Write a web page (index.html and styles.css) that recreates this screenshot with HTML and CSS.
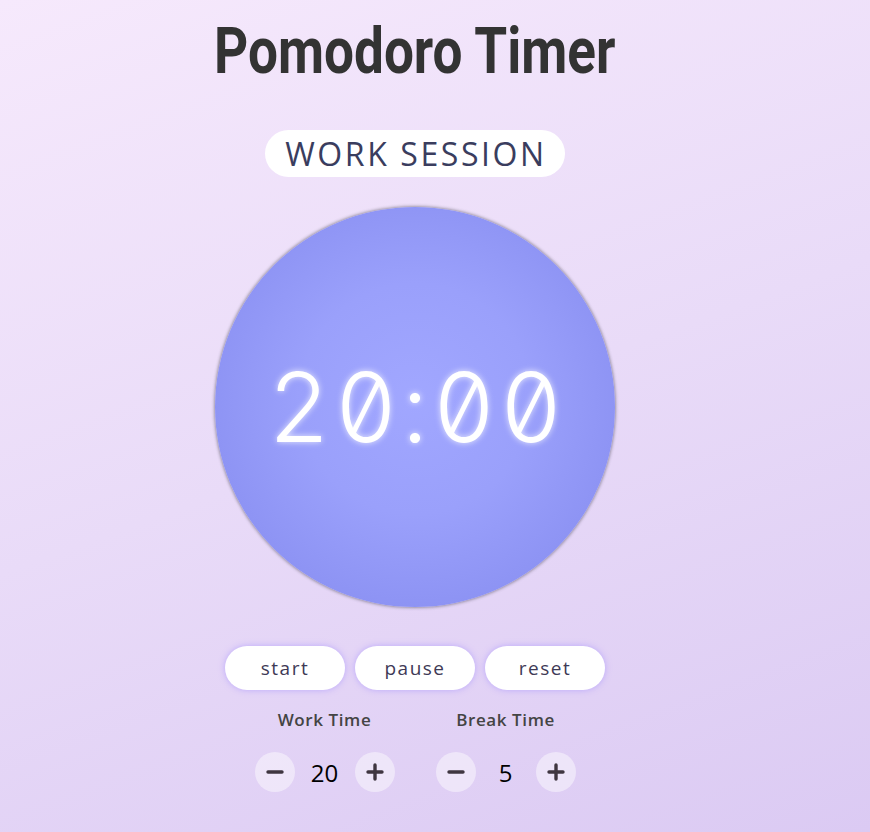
FILE: index.html
```html
<!DOCTYPE html>
<html lang="en">
<head>
<meta charset="utf-8">
<title>Pomodoro Timer</title>
<link rel="stylesheet" href="styles.css">
</head>
<body>
<main class="app">
  <h1 class="title">Pomodoro Timer</h1>
  <div class="session">WORK SESSION</div>
  <div class="dial">
    <div class="time">20:00</div>
  </div>
  <div class="actions">
    <button class="btn">start</button>
    <button class="btn">pause</button>
    <button class="btn">reset</button>
  </div>
  <div class="settings">
    <div class="setting">
      <div class="label">Work Time</div>
      <div class="stepper">
        <button class="step" aria-label="decrease work time">
          <svg viewBox="0 0 20 20" width="20" height="20"><path d="M3 10h14" stroke="currentColor" stroke-width="3.4" stroke-linecap="round"/></svg>
        </button>
        <span class="value">20</span>
        <button class="step" aria-label="increase work time">
          <svg viewBox="0 0 20 20" width="20" height="20"><path d="M3 10h14M10 3v14" stroke="currentColor" stroke-width="3.4" stroke-linecap="round"/></svg>
        </button>
      </div>
    </div>
    <div class="setting">
      <div class="label">Break Time</div>
      <div class="stepper">
        <button class="step" aria-label="decrease break time">
          <svg viewBox="0 0 20 20" width="20" height="20"><path d="M3 10h14" stroke="currentColor" stroke-width="3.4" stroke-linecap="round"/></svg>
        </button>
        <span class="value">5</span>
        <button class="step" aria-label="increase break time">
          <svg viewBox="0 0 20 20" width="20" height="20"><path d="M3 10h14M10 3v14" stroke="currentColor" stroke-width="3.4" stroke-linecap="round"/></svg>
        </button>
      </div>
    </div>
  </div>
</main>
</body>
</html>
```

FILE: styles.css
```css
html, body {
  margin: 0;
  height: 100%;
}
body {
  background: linear-gradient(160deg, #f6e9fc 0%, #e9dbf8 50%, #dbcaf3 100%);
  font-family: "Open Sans", "DejaVu Sans", sans-serif;
  overflow: hidden;
}
.app {
  width: 830px;
  display: flex;
  flex-direction: column;
  align-items: center;
}
.title {
  margin: 14px 0 0;
  font-family: "Roboto", sans-serif;
  font-weight: 700;
  font-size: 64px;
  line-height: 76px;
  color: #333333;
  transform: scaleX(0.83);
  white-space: nowrap;
}
.session {
  margin-top: 40px;
  height: 47px;
  width: 300px;
  box-sizing: border-box;
  border-radius: 24px;
  background: #ffffff;
  color: #3a3d5e;
  font-size: 32px;
  line-height: 47px;
  text-align: center;
  letter-spacing: 2.6px;
  text-indent: 2px;
}
.dial {
  margin-top: 30px;
  width: 400px;
  height: 400px;
  border-radius: 50%;
  background: radial-gradient(circle at 50% 48%, #a1a7ff 0%, #9aa0fb 40%, #8c92f3 75%, #8389ee 100%);
  box-shadow: 0 0 3px 1px rgba(60, 60, 70, 0.45);
  display: flex;
  align-items: center;
  justify-content: center;
}
.time {
  font-family: "Inter", sans-serif;
  font-weight: 300;
  font-feature-settings: "tnum" 1, "zero" 1;
  font-size: 96px;
  color: #ffffff;
  letter-spacing: 5px;
  text-shadow: 0 0 6px rgba(255, 255, 255, 0.8);
  margin-left: 5px;
}
.actions {
  margin-top: 39px;
  display: flex;
  gap: 10px;
}
.btn {
  width: 120px;
  height: 44px;
  border: none;
  border-radius: 22px;
  background: #ffffff;
  box-shadow: 0 0 6px rgba(160, 140, 255, 0.6);
  font-family: "Open Sans", sans-serif;
  font-size: 19px;
  font-weight: 500;
  color: #3e3a56;
  letter-spacing: 1.5px;
  padding: 0;
}
.settings {
  margin-top: 18px;
  display: flex;
  gap: 41px;
}
.setting {
  width: 140px;
  display: flex;
  flex-direction: column;
  align-items: center;
}
.label {
  font-size: 17px;
  font-weight: 600;
  color: #444444;
  line-height: 24px;
  letter-spacing: 0.6px;
  white-space: nowrap;
}
.stepper {
  margin-top: 20px;
  display: flex;
  align-items: center;
}
.step {
  width: 40px;
  height: 40px;
  border: none;
  border-radius: 50%;
  background: rgba(255, 255, 255, 0.45);
  color: #3f3640;
  display: flex;
  align-items: center;
  justify-content: center;
  padding: 0;
}
.value {
  width: 60px;
  text-align: center;
  font-size: 24px;
  color: #000000;
}
```
